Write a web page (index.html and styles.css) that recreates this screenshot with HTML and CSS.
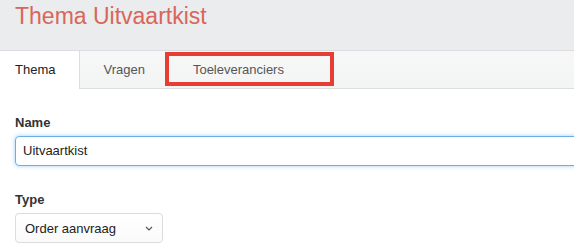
FILE: index.html
```html
<!DOCTYPE html>
<html>
<head>
<meta charset="utf-8">
<link rel="stylesheet" href="styles.css">
</head>
<body>
<header class="page-header">
  <h1 class="page-title">Thema Uitvaartkist</h1>
</header>
<nav class="tabs">
  <div class="tab tab-active">Thema</div>
  <div class="tab">Vragen</div>
  <div class="tab tab-third">Toeleveranciers</div>
  <div class="highlight"></div>
</nav>
<main class="form">
  <div class="form-group">
    <label class="label">Name</label>
    <div class="input input-focus">Uitvaartkist</div>
  </div>
  <div class="form-group form-group-last">
    <label class="label">Type</label>
    <div class="select">
      <span>Order aanvraag</span>
      <svg class="chevron" width="8" height="5" viewBox="0 0 8 5"><path d="M1 1 L4 4 L7 1" fill="none" stroke="#555" stroke-width="1.2"/></svg>
    </div>
  </div>
</main>
</body>
</html>
```
FILE: styles.css
```css
html, body {
  margin: 0;
  padding: 0;
  overflow: hidden;
  background: #fff;
}
body {
  font-family: "Liberation Sans", Arial, sans-serif;
  font-size: 13px;
  color: #333;
}
.page-header {
  box-sizing: border-box;
  height: 50px;
  padding: 3px 0 0 15px;
  background: #ebecee;
}
.page-title {
  margin: 0;
  font-size: 23px;
  line-height: 26px;
  font-weight: normal;
  color: #d8665a;
}
.tabs {
  position: relative;
  display: flex;
  height: 37px;
  border-top: 1px solid #dcdde0;
  border-bottom: 1px solid #dcdde0;
  background: linear-gradient(#f7f7f7, #f3f4f4);
}
.tab {
  line-height: 37px;
  padding: 0 23px;
  color: #555;
}
.tab-active {
  padding: 0 24px 0 15px;
  background: #fff;
  color: #222;
  border-right: 1px solid #dcdde0;
  height: 38px;
  margin-bottom: -1px;
}
.tab-third {
  padding-left: 25px;
}
.highlight {
  position: absolute;
  left: 165px;
  top: 1px;
  width: 161px;
  height: 26px;
  border: 4px solid #e63d35;
}
.form {
  padding: 25px 0 0 15px;
  overflow: hidden;
}
.form-group {
  margin-bottom: 25px;
}
.form-group-last {
  margin-bottom: 0;
}
.label {
  display: block;
  font-weight: bold;
  line-height: 18px;
  margin-bottom: 4px;
  color: #333;
}
.input {
  box-sizing: border-box;
  width: calc(100% + 30px);
  height: 30px;
  line-height: 28px;
  padding: 0 7px;
  border: 1px solid #ccc;
  border-radius: 4px;
  color: #222;
}
.input-focus {
  border-color: #66afe9;
  box-shadow: 0 0 4px rgba(102, 175, 233, 0.6);
}
.select {
  box-sizing: border-box;
  display: flex;
  align-items: center;
  justify-content: space-between;
  width: 148px;
  height: 30px;
  padding: 0 9px;
  border: 1px solid #dcdcdc;
  border-radius: 4px;
  background: linear-gradient(#fff, #fafafa);
  color: #222;
}
```
